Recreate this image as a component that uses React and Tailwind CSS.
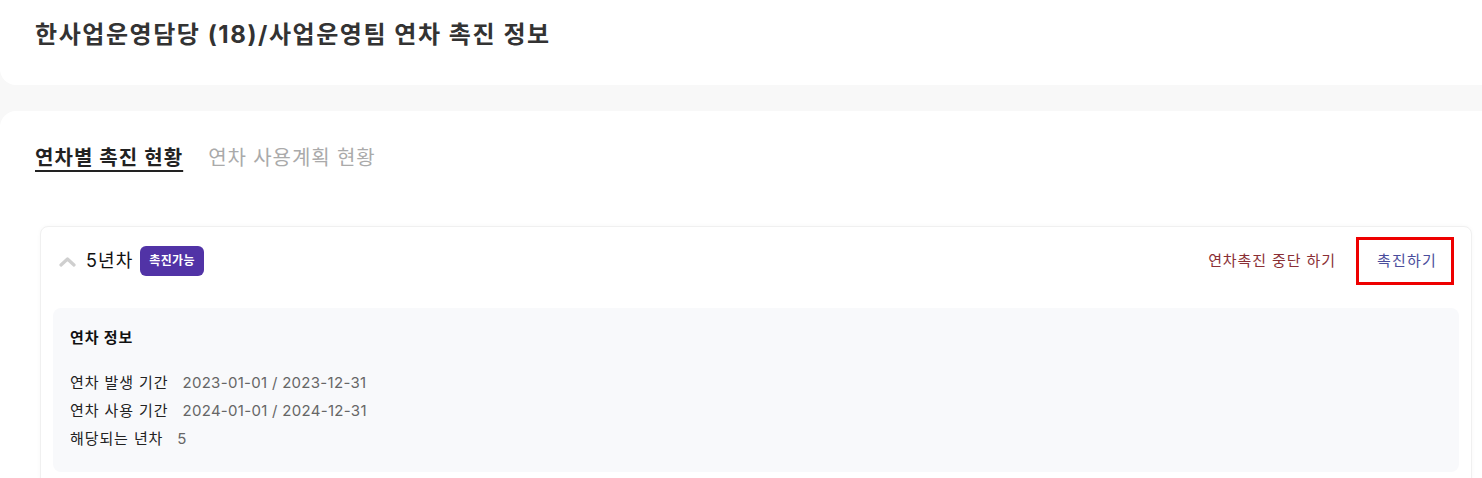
import React from "react";

const FONT = "font-['Inter','Noto_Sans_CJK_KR',sans-serif]";

const INFO_ROWS = [
  { label: "연차 발생 기간", value: "2023-01-01 / 2023-12-31" },
  { label: "연차 사용 기간", value: "2024-01-01 / 2024-12-31" },
  { label: "해당되는 년차", value: "5" },
];

const ChevronUp = () => (
  <svg width="17" height="11" viewBox="0 0 17 11" fill="none">
    <polyline
      points="2,9 8.5,3 15,9"
      stroke="#cfcfcf"
      strokeWidth="3.2"
      strokeLinecap="round"
      strokeLinejoin="round"
    />
  </svg>
);

const App = () => {
  return (
    <div className={`min-h-screen bg-[#f8f8f8] ${FONT}`}>
      <div className="h-[85px] rounded-bl-[16px] bg-white px-[35px] pt-[17px]">
        <h1 className="text-[24px] font-bold leading-[36px] tracking-[0.065em] text-[#333]">
          한사업운영담당 (18)/사업운영팀 연차 촉진 정보
        </h1>
      </div>

      <div className="mt-[26px] rounded-tl-[16px] bg-white pl-[35px] pr-[10px] pt-[33px]">
        <div className="flex items-center gap-[25px]">
          <span className="text-[20px] font-bold leading-[28px] tracking-[0.055em] text-[#222] underline decoration-2 underline-offset-[5px]">
            연차별 촉진 현황
          </span>
          <span className="text-[20px] leading-[28px] tracking-[0.045em] text-[#aaa]">
            연차 사용계획 현황
          </span>
        </div>

        <div className="ml-[5px] mt-[54px] rounded-[8px] border border-[#f0f0f0] bg-white px-[12px] pb-[13px] pt-[10px] shadow-[0_0_4px_rgba(0,0,0,0.03)]">
          <div className="flex h-[48px] items-center justify-between pr-[5px]">
            <div className="flex items-center">
              <span className="ml-[6px] flex items-center">
                <ChevronUp />
              </span>
              <span className="ml-[10px] text-[18px] leading-[26px] tracking-[0.06em] text-[#111]">
                5년차
              </span>
              <span className="ml-[7px] flex h-[30px] items-center rounded-[6px] bg-[#5133a6] px-[9px] text-[12px] font-semibold tracking-[0.03em] text-white">
                촉진가능
              </span>
            </div>
            <div className="flex items-center">
              <button
                type="button"
                className="text-[15px] leading-[22px] tracking-[0.06em] text-[#8a2f35]"
              >
                연차촉진 중단 하기
              </button>
              <button
                type="button"
                className="ml-[20px] flex h-[48px] items-center border-[3px] border-[#ee0000] pl-[18px] pr-[14px] text-[15px] leading-[22px] tracking-[0.08em] text-[#4a4d9c]"
              >
                촉진하기
              </button>
            </div>
          </div>

          <div className="mt-[23px] rounded-[8px] bg-[#f8f9fb] px-[17px] pb-[19px] pt-[19px]">
            <p className="text-[15px] font-bold leading-[22px] tracking-[0.06em] text-[#111]">
              연차 정보
            </p>
            <div className="mt-[20px]">
              {INFO_ROWS.map((row) => (
                <div
                  key={row.label}
                  className="flex gap-[14px] text-[15px] leading-[28px]"
                >
                  <span className="tracking-[0.06em] text-[#222]">
                    {row.label}
                  </span>
                  <span className="tracking-[0.02em] text-[#666]">
                    {row.value}
                  </span>
                </div>
              ))}
            </div>
          </div>
        </div>
      </div>
    </div>
  );
};

export default App;
